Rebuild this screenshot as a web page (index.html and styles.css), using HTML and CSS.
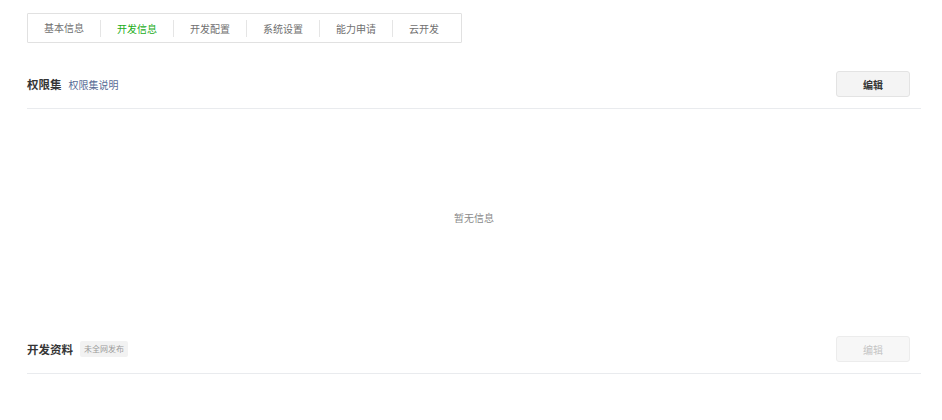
FILE: index.html
```html
<!DOCTYPE html>
<html lang="zh">
<head>
<meta charset="utf-8">
<link rel="stylesheet" href="styles.css">
</head>
<body>
<div class="page">
  <div class="tabs">
    <div class="tab">基本信息</div>
    <div class="tab active">开发信息</div>
    <div class="tab">开发配置</div>
    <div class="tab">系统设置</div>
    <div class="tab">能力申请</div>
    <div class="tab">云开发</div>
  </div>

  <div class="section-head first">
    <div class="title-wrap">
      <span class="title">权限集</span>
      <span class="link">权限集说明</span>
    </div>
    <button class="btn">编辑</button>
  </div>
  <div class="empty">暂无信息</div>

  <div class="section-head">
    <div class="title-wrap">
      <span class="title">开发资料</span>
      <span class="badge">未全网发布</span>
    </div>
    <button class="btn disabled">编辑</button>
  </div>
</div>
</body>
</html>
```

FILE: styles.css
```css
html, body {
  margin: 0;
  padding: 0;
  background: #ffffff;
}
body {
  font-family: "Noto Sans CJK SC", "Noto Sans", sans-serif;
  color: #353535;
}
.page {
  padding: 13px 21px 0 27px;
}
.tabs {
  display: inline-flex;
  align-items: center;
  height: 28px;
  border: 1px solid #e1e1e1;
  border-radius: 1px;
  padding: 0 6px 0 0;
}
.tab {
  position: relative;
  padding: 0 16px;
  font-size: 10px;
  line-height: 28px;
  color: #707070;
}
.tab + .tab {
  border-left: 1px solid #e5e5e5;
  line-height: 17px;
}
.tab.active {
  color: #1aad19;
}
.section-head {
  display: flex;
  align-items: center;
  justify-content: space-between;
  padding: 11px 11px 11px 0;
  border-bottom: 1px solid #e9ebee;
}
.section-head.first {
  padding-top: 28px;
}
.title-wrap {
  display: flex;
  align-items: center;
  gap: 7px;
}
.title {
  font-size: 11.5px;
  font-weight: bold;
  color: #353535;
}
.link {
  font-size: 10px;
  color: #576b95;
}
.badge {
  font-size: 8px;
  color: #9a9a9a;
  background: #f2f2f2;
  padding: 3px 4px;
  border-radius: 2px;
  line-height: 10px;
}
.btn {
  box-sizing: border-box;
  width: 74px;
  height: 26px;
  border: 1px solid #e3e3e3;
  border-radius: 3px;
  background: #f4f4f4;
  font-family: inherit;
  font-size: 10px;
  font-weight: bold;
  color: #353535;
  padding: 0;
}
.btn.disabled {
  background: #f7f7f7;
  color: #c4c4c4;
  border-color: #ececec;
  font-weight: normal;
}
.empty {
  height: 216px;
  display: flex;
  align-items: center;
  justify-content: center;
  font-size: 10px;
  color: #8a8a8a;
}
```
